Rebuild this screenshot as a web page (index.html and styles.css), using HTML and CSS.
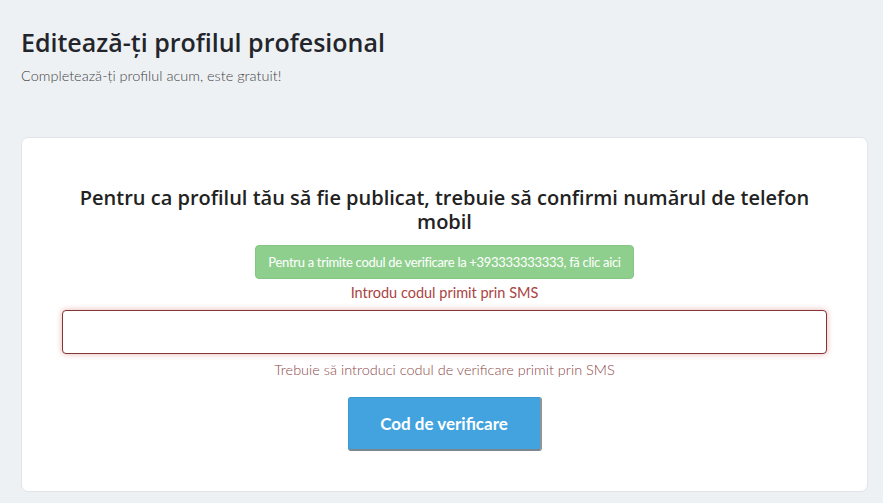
FILE: index.html
```html
<!DOCTYPE html>
<html>
<head>
	<meta charset="utf-8">
	<title>Editează-ți profilul profesional</title>
	<link rel="stylesheet" href="styles.css">
</head>
<body>
	<div class="page">
		<div class="page-head">
			<h1>Editează-ți profilul profesional</h1>
			<p>Completează-ți profilul acum, este gratuit!</p>
		</div>
		<div class="card">
			<h2>Pentru ca profilul tău să fie publicat, trebuie să confirmi numărul de telefon mobil</h2>
			<button class="btn-send" type="button">Pentru a trimite codul de verificare la +393333333333, fă clic aici</button>
			<label class="label-err" for="code">Introdu codul primit prin SMS</label>
			<input id="code" class="input-err" type="text" autofocus>
			<span class="help-err">Trebuie să introduci codul de verificare primit prin SMS</span>
			<button class="btn-verify" type="button">Cod de verificare</button>
		</div>
	</div>
</body>
</html>
```

FILE: styles.css
```css
*
{
	margin: 0;
	padding: 0;
	box-sizing: border-box;
}
body
{
	background: #eef1f4;
	font-family: "Lato", "Liberation Sans", sans-serif;
	color: #222;
}
.page
{
	padding: 25px 15px 11px 21px;
}
.page-head h1
{
	font-family: "Open Sans", sans-serif;
	font-size: 25px;
	font-weight: 600;
	color: #23252a;
	line-height: 34px;
}
.page-head p
{
	margin-top: 8px;
	font-size: 14.5px;
	font-weight: 300;
	color: #444;
	line-height: 18px;
}
.card
{
	margin-top: 52px;
	background: #fff;
	border: 1px solid #e1e4e8;
	border-radius: 7px;
	padding: 48px 40px 40px 40px;
	display: flex;
	flex-direction: column;
	align-items: center;
}
.card h2
{
	font-family: "Open Sans", sans-serif;
	font-size: 20px;
	font-weight: 600;
	color: #222;
	text-align: center;
	line-height: 24px;
	padding: 0 10px;
}
.btn-send
{
	margin-top: 11px;
	height: 34px;
	padding: 0 12px;
	background: #8fcf8e;
	border: 1px solid #86c685;
	border-radius: 4px;
	color: #fff;
	font-family: "Lato", sans-serif;
	font-size: 13px;
	letter-spacing: -0.3px;
	font-weight: 400;
}
.label-err
{
	margin-top: 4px;
	font-size: 14.5px;
	color: #a94442;
	line-height: 20px;
}
.input-err
{
	margin-top: 7px;
	width: 100%;
	height: 44px;
	border: 1px solid #843534;
	border-radius: 4px;
	box-shadow: 0 0 6px #e7b3b3;
	padding: 0 12px;
	font-size: 16px;
	outline: none;
	caret-color: #333;
}
.help-err
{
	margin-top: 6px;
	font-size: 14.5px;
	font-weight: 300;
	color: #8c4a49;
	line-height: 20px;
}
.btn-verify
{
	margin-top: 17px;
	width: 194px;
	height: 54px;
	background: #42a3de;
	border: 1px solid #3c9ad3;
	border-bottom: 2px solid #7a8690;
	border-right: 2px solid #8d969d;
	border-radius: 3px;
	color: #fff;
	font-family: "Lato", sans-serif;
	font-size: 17px;
	font-weight: 700;
}
```
